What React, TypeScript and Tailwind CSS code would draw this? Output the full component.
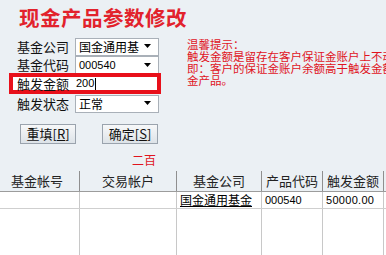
import React from "react";

const CJK = { fontFamily: '"Noto Sans CJK SC", "Noto Sans", sans-serif' };

function Arrow() {
  return (
    <svg width="8" height="5" viewBox="0 0 8 5" className="shrink-0">
      <path d="M0 0 H7 L3.5 4 Z" fill="#000" />
    </svg>
  );
}

function Select({ value, mono }: { value: string; mono?: boolean }) {
  return (
    <div className="flex h-[18px] w-[84px] items-center border border-[#a9b0b8] bg-white pl-[3px] pr-[6px]">
      <span
        className={
          "flex-1 whitespace-nowrap leading-[16px] text-black " + (mono ? "text-[11px]" : "text-[12px]")
        }
        style={mono ? { fontFamily: '"Liberation Sans", sans-serif' } : undefined}
      >
        {value}
      </span>
      <Arrow />
    </div>
  );
}

function Label({ text }: { text: string }) {
  return <span className="w-[58px] shrink-0 whitespace-nowrap text-[13px] leading-[16px] text-[#111]">{text}</span>;
}

function Button({ label, k }: { label: string; k: string }) {
  return (
    <div className="flex h-[20px] w-[56px] items-center justify-center border border-[#9aa3ad] bg-gradient-to-b from-[#f7f8f9] to-[#dde3e8] text-[13px] leading-[16px] text-[#111]">
      {label}[<span className="underline">{k}</span>]
    </div>
  );
}

const cols = [
  { w: "w-[80px]", h: "基金帐号", extra: "pr-[5px]" },
  { w: "w-[97px]", h: "交易帐户", extra: "" },
  { w: "w-[85px]", h: "基金公司", extra: "" },
  { w: "w-[61px]", h: "产品代码", extra: "" },
  { w: "w-[61px]", h: "触发金额", extra: "" },
];

export default function App() {
  return (
    <div className="relative flex h-[255px] w-[386px] flex-col overflow-hidden bg-[#ebf0f4]" style={CJK}>
      <div className="mt-[3px] h-[28px] pl-[19px] text-[20.5px] font-bold leading-[28px] tracking-[0.5px] text-[#e2222c]">
        现金产品参数修改
      </div>

      <div className="mt-[6px] flex">
        <div className="flex w-[178px] shrink-0 flex-col">
          <div className="flex h-[19px] items-center pl-[17px]">
            <Label text="基金公司" />
            <Select value="国金通用基" />
          </div>
          <div className="flex h-[18px] items-center pl-[17px]">
            <Label text="基金代码" />
            <Select value="000540" mono />
          </div>
          <div className="-mt-px ml-[9px] flex h-[21px] w-[152px] items-center border-[4px] border-[#e8101a] bg-white pl-[4px]">
            <Label text="触发金额" />
            <div className="ml-px flex h-[13px] w-[79px] items-center bg-white">
              <span className="text-[11px] leading-[13px] text-black" style={{ fontFamily: '"Liberation Sans", sans-serif' }}>
                200
              </span>
              <span className="ml-px h-[12px] w-px bg-black" />
            </div>
          </div>
          <div className="flex h-[19px] items-center pl-[17px]">
            <Label text="触发状态" />
            <Select value="正常" />
          </div>
        </div>
        <div className="flex-1 overflow-hidden whitespace-nowrap pl-[9px] pt-px text-[11.5px] leading-[12px] text-[#e0141e]">
          <div className="h-[12px]">温馨提示：</div>
          <div className="h-[12px]">触发金额是留存在客户保证金账户上不动用的金额，</div>
          <div className="h-[12px]">即：客户的保证金账户余额高于触发金额时，才会购买现</div>
          <div className="h-[12px]">金产品。</div>
        </div>
      </div>

      <div className="mt-[11px] flex pl-[20px]">
        <Button label="重填" k="R" />
        <div className="w-[26px]" />
        <Button label="确定" k="S" />
      </div>

      <div className="mt-[9px] flex h-[14px] w-[156px] justify-end text-[12px] leading-[14px] text-[#e0141e]">二百</div>

      <div className="mt-[4px] flex flex-1 flex-col">
        <div className="flex h-[21px] border-b border-[#9c9c9c]">
          {cols.map((c) => (
            <div
              key={c.h}
              className={`${c.w} ${c.extra} flex shrink-0 items-center justify-center border-r border-[#8f8f8f] text-[13px] leading-[16px] text-[#222]`}
            >
              {c.h}
            </div>
          ))}
        </div>
        <div className="flex h-[17px] border-b border-[#cfcfcf] bg-white">
          {cols.map((c, i) => (
            <div
              key={c.h}
              className={`${c.w} flex shrink-0 items-center border-r border-[#c8c8c8] pl-[3px] leading-[14px] text-black`}
            >
              {i === 2 && <span className="border-b border-black text-[12px] leading-[13px]">国金通用基金</span>}
              {i === 3 && (
                <span className="text-[11px]" style={{ fontFamily: '"Liberation Sans", sans-serif' }}>
                  000540
                </span>
              )}
              {i === 4 && (
                <span className="text-[11px] tracking-[0.3px]" style={{ fontFamily: '"Liberation Sans", sans-serif' }}>
                  50000.00
                </span>
              )}
            </div>
          ))}
        </div>
        <div className="flex flex-1 bg-white">
          {cols.map((c) => (
            <div key={c.h} className={`${c.w} shrink-0 border-r border-[#c8c8c8]`} />
          ))}
        </div>
      </div>
    </div>
  );
}
